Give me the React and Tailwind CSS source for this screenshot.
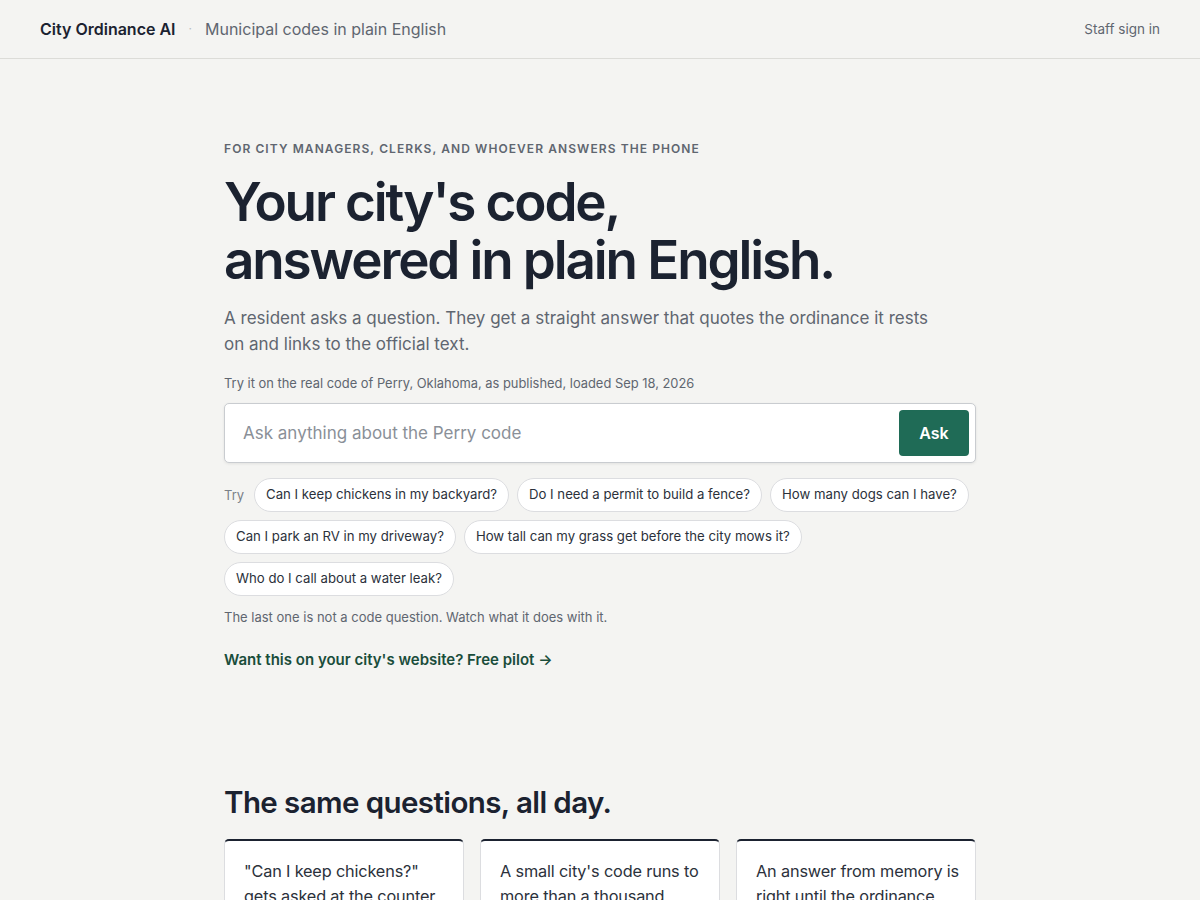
import React from "react";

const chips = [
  "Can I keep chickens in my backyard?",
  "Do I need a permit to build a fence?",
  "How many dogs can I have?",
  "Can I park an RV in my driveway?",
  "How tall can my grass get before the city mows it?",
  "Who do I call about a water leak?",
];

const cards = [
  "\"Can I keep chickens?\" gets asked at the counter, on the phone, and by email, every week.",
  "A small city's code runs to more than a thousand pages, and nobody reads it cover to cover.",
  "An answer from memory is right until the ordinance changes. Then it is wrong and nobody knows.",
];

export default function App() {
  return (
    <div className="min-h-screen bg-[#f4f4f2] text-[#1b2230]" style={{ fontFamily: "Inter, 'Liberation Sans', sans-serif" }}>
      {/* header */}
      <header className="h-[59px] border-b border-[#dcdcd8] px-10 flex items-center justify-between">
        <div className="flex items-center">
          <span className="text-[16px] font-semibold text-[#1b2230]">City Ordinance AI</span>
          <span className="mx-[13px] text-[#b8bcc2] text-[12px]">·</span>
          <span className="text-[16px] text-[#5f6670]">Municipal codes in plain English</span>
        </div>
        <a className="text-[13.5px] text-[#5f6670]">Staff sign in</a>
      </header>

      <main className="max-w-[752px] mx-auto">
        {/* hero */}
        <section className="pt-[81px]">
          <p className="text-[12px] font-semibold tracking-[0.09em] uppercase text-[#5f6670]">
            For city managers, clerks, and whoever answers the phone
          </p>
          <h1 className="mt-[15px] text-[53px] leading-[58px] font-semibold tracking-[-0.04em] text-[#1b2230]">
            Your city's code,
            <br />
            answered in plain English.
          </h1>
          <p className="mt-[16px] text-[17px] leading-[26px] text-[#5f6670] max-w-[720px]">
            A resident asks a question. They get a straight answer that quotes the ordinance it rests on and links to the official text.
          </p>
          <p className="mt-[17px] text-[12.9px] text-[#5f6670]">
            Try it on the real code of Perry, Oklahoma, as published, loaded Sep 18, 2026
          </p>

          <div className="mt-[10px] h-[60px] bg-white border border-[#c9ccd0] rounded-[5px] shadow-[0_1px_3px_rgba(0,0,0,0.08)] flex items-center pl-[18px] pr-[6px]">
            <span className="flex-1 text-[17px] text-[#8a9098]">Ask anything about the Perry code</span>
            <button className="w-[70px] h-[46px] rounded-[4px] bg-[#1f6b56] text-white text-[16px] font-semibold">
              Ask
            </button>
          </div>

          <div className="mt-[15px] flex flex-wrap items-center gap-x-[8px] gap-y-[8px]">
            <span className="text-[13px] text-[#7a8088] mr-[2px]">Try</span>
            {chips.map((c) => (
              <button
                key={c}
                className="h-[34px] px-[11px] rounded-full bg-white border border-[#dcdde0] text-[13.2px] text-[#2b313b]"
              >
                {c}
              </button>
            ))}
          </div>

          <p className="mt-[12px] text-[13px] text-[#5f6670]">
            The last one is not a code question. Watch what it does with it.
          </p>
          <a className="block mt-[21px] text-[15px] font-semibold text-[#1a4d3b]">
            Want this on your city's website? Free pilot →
          </a>
        </section>

        {/* same questions */}
        <section className="pt-[109px] pb-16">
          <h2 className="text-[29.5px] font-semibold tracking-[-0.02em] text-[#1b2230]">The same questions, all day.</h2>
          <div className="mt-[14px] grid grid-cols-3 gap-4">
            {cards.map((t) => (
              <div key={t} className="bg-white border border-[#dcdde0] border-t-2 border-t-[#1b2230] rounded-[5px] pl-[19px] pr-[14px] pt-[18px] pb-6">
                <p className="text-[16.3px] leading-[25px] tracking-[-0.01em] text-[#2b313b]">{t}</p>
              </div>
            ))}
          </div>
        </section>
      </main>
    </div>
  );
}
